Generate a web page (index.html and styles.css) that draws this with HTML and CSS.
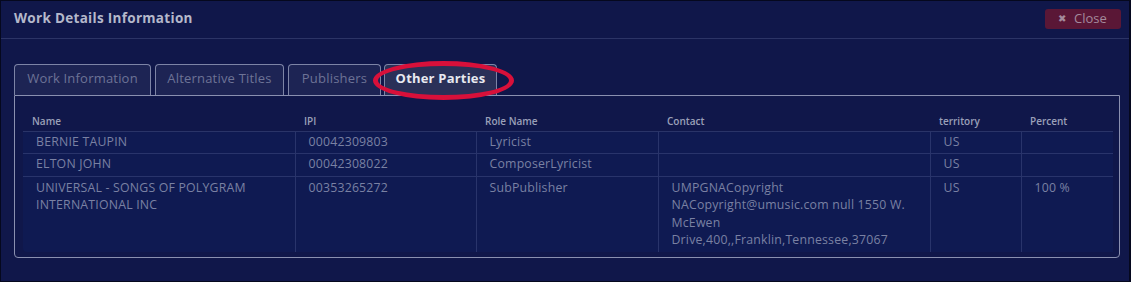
FILE: index.html
```html
<!DOCTYPE html>
<html lang="en">
  <head>
    <meta charset="UTF-8" />
    <meta name="viewport" content="width=device-width, initial-scale=1.0" />
    <title>Work Details Information</title>
    <link rel="stylesheet" href="styles.css">
  </head>
  <body>
    <div class="modal">
      <div class="modal-head">
        <div class="modal-title">Work Details Information</div>
        <button class="close-btn"><span class="close-x">&#10006;</span>Close</button>
      </div>
      <div class="modal-body">
        <div class="tabs">
          <div class="tab">Work Information</div>
          <div class="tab">Alternative Titles</div>
          <div class="tab">Publishers</div>
          <div class="tab active">Other Parties<span class="ring"></span></div>
        </div>
        <div class="panel">
          <table class="parties">
            <thead>
              <tr>
                <th class="c-name">Name</th>
                <th class="c-ipi">IPI</th>
                <th class="c-role">Role Name</th>
                <th class="c-contact">Contact</th>
                <th class="c-terr">territory</th>
                <th class="c-pct">Percent</th>
              </tr>
            </thead>
            <tbody>
              <tr>
                <td>BERNIE TAUPIN</td>
                <td>00042309803</td>
                <td>Lyricist</td>
                <td></td>
                <td>US</td>
                <td></td>
              </tr>
              <tr>
                <td>ELTON JOHN</td>
                <td>00042308022</td>
                <td>ComposerLyricist</td>
                <td></td>
                <td>US</td>
                <td></td>
              </tr>
              <tr class="tall">
                <td>UNIVERSAL - SONGS OF POLYGRAM INTERNATIONAL INC</td>
                <td>00353265272</td>
                <td>SubPublisher</td>
                <td>UMPGNACopyright NACopyright@umusic.com null 1550 W. McEwen Drive,400,,Franklin,Tennessee,37067</td>
                <td>US</td>
                <td>100 %</td>
              </tr>
            </tbody>
          </table>
        </div>
      </div>
    </div>
  </body>
</html>
```

FILE: styles.css
```css
* {
  box-sizing: border-box;
  margin: 0;
  padding: 0;
}
body {
  width: 1131px;
  height: 282px;
  background-color: #0e1440;
  font-family: 'Open Sans', 'Noto Sans', sans-serif;
  overflow: hidden;
}
.modal {
  height: 282px;
  border: 1px solid #05081e;
  border-right-width: 2px;
  background-color: #10174a;
}
.modal-head {
  display: flex;
  justify-content: space-between;
  align-items: center;
  height: 38px;
  padding: 0 8px 0 13px;
  border-bottom: 1px solid #2c3466;
}
.modal-title {
  color: #b4b8cb;
  font-size: 13.5px;
  font-weight: 700;
  letter-spacing: 0.3px;
  margin-top: -3px;
}
.close-btn {
  display: flex;
  align-items: center;
  gap: 8px;
  width: 76px;
  height: 20px;
  margin-top: -2px;
  padding: 0 0 2px 13px;
  border: none;
  border-radius: 3px;
  background-color: #5a1736;
  color: #a48a9c;
  font-family: inherit;
  font-size: 13px;
}
.close-x {
  font-size: 10px;
}
.modal-body {
  padding: 25px 9px 0 13px;
}
.tabs {
  display: flex;
  gap: 4px;
  height: 31px;
}
.tab {
  position: relative;
  display: flex;
  flex-shrink: 0;
  align-items: center;
  justify-content: center;
  padding-bottom: 4px;
  border: 1px solid #7d84a6;
  border-bottom: none;
  border-radius: 4px 4px 0 0;
  background-color: #1d2454;
  color: #6d7396;
  font-size: 13px;
  letter-spacing: 0.2px;
  white-space: nowrap;
}
.tab:nth-child(1) {
  width: 137px;
}
.tab:nth-child(2) {
  width: 129px;
}
.tab:nth-child(3) {
  width: 93px;
}
.tab.active {
  width: 113px;
  margin-left: -1px;
  background-color: #2a3058;
  color: #e8e9f0;
  font-weight: 700;
}
.ring {
  position: absolute;
  left: -12px;
  top: -4px;
  width: 141px;
  height: 39px;
  border: 5px solid #d8103a;
  border-radius: 50%;
}
.panel {
  height: 163px;
  padding: 8px 7px 0 8px;
  border: 1px solid #8a90b0;
  border-radius: 0 0 4px 4px;
}
.parties {
  width: 1090px;
  border-collapse: collapse;
  table-layout: fixed;
}
.parties th {
  height: 27px;
  padding: 8px 0 0 9px;
  color: #9ba0b9;
  font-size: 10px;
  font-weight: 600;
  text-align: left;
  border-bottom: 1px solid #2a3468;
}
.c-name { width: 272px; }
.c-ipi { width: 181px; }
.c-role { width: 182px; }
.c-contact { width: 272px; }
.c-terr { width: 91px; }
.c-pct { width: 92px; }
.parties td {
  height: 22px;
  padding: 1px 12px 3px 13px;
  background-color: #0f1a52;
  color: #7a81a3;
  font-size: 12.3px;
  letter-spacing: 0.2px;
  line-height: 17.5px;
  vertical-align: top;
  border: 1px solid #29346b;
  border-top: none;
}
.parties td:first-child {
  border-left: none;
}
.parties td:last-child {
  border-right: none;
}
.parties tr.tall td {
  height: 75px;
  padding-top: 2px;
  border-bottom: none;
}
.parties tr.tall td:first-child {
  border-bottom-left-radius: 4px;
}
```
